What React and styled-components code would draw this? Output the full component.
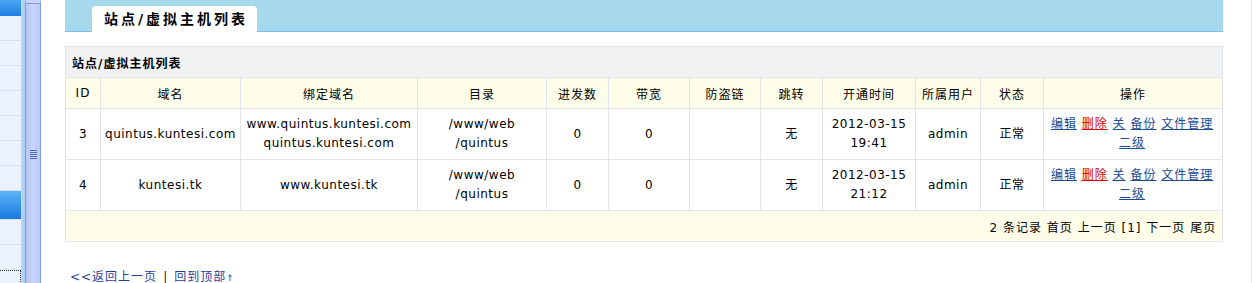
import styled, { createGlobalStyle } from "styled-components";

const GlobalStyle = createGlobalStyle`
  html, body {
    margin: 0;
    padding: 0;
    background: #fff;
  }
  body {
    font-family: "DejaVu Sans", "Noto Sans CJK SC", sans-serif;
    font-size: 12px;
    color: #000;
  }
`;

const columns = [
  { title: "ID", width: 35 },
  { title: "域名", width: 140 },
  { title: "绑定域名", width: 177 },
  { title: "目录", width: 129 },
  { title: "进发数", width: 62 },
  { title: "带宽", width: 81 },
  { title: "防盗链", width: 71 },
  { title: "跳转", width: 62 },
  { title: "开通时间", width: 93 },
  { title: "所属用户", width: 65 },
  { title: "状态", width: 63 },
  { title: "操作", width: 179 },
];

const sites = [
  {
    id: 3,
    domain: "quintus.kuntesi.com",
    bound: ["www.quintus.kuntesi.com", "quintus.kuntesi.com"],
    dir: ["/www/web", "/quintus"],
    date: "2012-03-15",
    time: "19:41",
  },
  {
    id: 4,
    domain: "kuntesi.tk",
    bound: ["www.kuntesi.tk"],
    dir: ["/www/web", "/quintus"],
    date: "2012-03-15",
    time: "21:12",
  },
];

const Page = styled.div`
  display: flex;
  height: 283px;
  overflow: hidden;
`;

const Sidebar = styled.div`
  width: 21px;
  flex-shrink: 0;
  background: #eaf3fd;
  display: flex;
  flex-direction: column;
  overflow: hidden;
`;

const SideHead = styled.div`
  height: 16px;
  flex-shrink: 0;
  background: linear-gradient(#4aa6f2, #1d7fe2);
`;

const SideItem = styled.div`
  height: ${(p) => (p.$active ? 28 : 24)}px;
  flex-shrink: 0;
  border-bottom: 1px solid #d2e2f4;
  background: ${(p) =>
    p.$active ? "linear-gradient(#5db4f7, #1a78e0)" : "transparent"};
  ${(p) => p.$focus && "border-top: 1px dotted #333; border-right: 1px dotted #333;"}
`;

const SideEdge = styled.div`
  width: 4px;
  flex-shrink: 0;
  background: linear-gradient(90deg, #bcd9f8, #a7cbf3);
`;

const Splitter = styled.div`
  width: 14px;
  flex-shrink: 0;
  border-left: 1px solid #7c9de0;
  border-right: 1px solid #7c9de0;
  border-top: 3px solid #c6d4f7;
  background: linear-gradient(90deg, #b4c6f4, #c9d5fa 50%, #b7c8f4);
  display: flex;
  align-items: flex-start;
  justify-content: center;
  padding-top: 147px;
  box-shadow: inset 0 1px 0 #7c9de0;
`;

const Grip = styled.svg`
  display: block;
`;

const Main = styled.div`
  flex: 1;
  padding: 0 28px 0 24px;
  border-right: 1px solid #e4e4e4;
  letter-spacing: 0.5px;
`;

const TabBar = styled.div`
  height: 31px;
  background: #a6d8ee;
  border-bottom: 1px solid #7ebde0;
  display: flex;
  align-items: flex-end;
  padding-left: 27px;
`;

const Tab = styled.div`
  width: 165px;
  height: 26px;
  margin-bottom: -1px;
  background: #fff;
  border-radius: 4px 4px 0 0;
  font-size: 14px;
  font-weight: bold;
  letter-spacing: 3px;
  line-height: 26px;
  text-align: center;
  text-indent: 3px;
`;

const Table = styled.table`
  margin-top: 14px;
  width: 100%;
  border-collapse: collapse;
  table-layout: fixed;
  border: 1px solid #e1e4e8;
`;

const Caption = styled.td`
  height: 30px;
  padding: 0 6px;
  background: #f1f2f4;
  font-weight: bold;
  letter-spacing: 1px;
  border: 1px solid #e1e4e8;
`;

const Th = styled.th`
  height: 30px;
  padding: 0;
  background: #fefde9;
  font-weight: normal;
  text-align: center;
  border: 1px solid #e1e4e8;
  letter-spacing: 1px;
`;

const Td = styled.td`
  height: 50px;
  padding: 0 2px;
  text-align: center;
  line-height: 19px;
  border: 1px solid #e1e4e8;
`;

const ActionTd = styled(Td)`
  padding: 0 7px 0 5px;
  letter-spacing: 1px;
`;

const ActionLink = styled.a`
  color: ${(p) => (p.$danger ? "#d40000" : "#1a4a94")};
  text-decoration: underline;
  cursor: pointer;
`;

const Footer = styled.td`
  height: 30px;
  padding: 0 6px;
  background: #fefde9;
  text-align: right;
  letter-spacing: 1px;
  border: 1px solid #e1e4e8;
`;

const BackLinks = styled.div`
  margin-top: 27px;
  padding-left: 5px;
  line-height: 16px;
  color: #1f3f9a;
  letter-spacing: 1px;
`;

const BackLink = styled.a`
  color: #1f3f9a;
  text-decoration: none;
  cursor: pointer;
`;

const Arrow = styled.span`
  font-size: 9px;
`;

const Divider = styled.span`
  color: #222;
  margin: 0 6px;
`;

const Lines = ({ items }) =>
  items.map((line, i) => (
    <div key={i}>{line}</div>
  ));

const App = () => {
  return (
    <>
      <GlobalStyle />
      <Page>
        <Sidebar>
          <SideHead />
          <SideItem />
          <SideItem />
          <SideItem />
          <SideItem />
          <SideItem />
          <SideItem />
          <SideItem />
          <SideItem $active />
          <SideItem />
          <SideItem />
          <SideItem $focus />
        </Sidebar>
        <SideEdge />
        <Splitter>
          <Grip width="7" height="9" viewBox="0 0 7 9">
            <rect x="0" y="0" width="7" height="1" fill="#4f67b8" />
            <rect x="0" y="2" width="7" height="1" fill="#4f67b8" />
            <rect x="0" y="4" width="7" height="1" fill="#4f67b8" />
            <rect x="0" y="6" width="7" height="1" fill="#4f67b8" />
            <rect x="0" y="8" width="7" height="1" fill="#4f67b8" />
          </Grip>
        </Splitter>
        <Main>
          <TabBar>
            <Tab>站点/虚拟主机列表</Tab>
          </TabBar>
          <Table>
            <colgroup>
              {columns.map((c) => (
                <col key={c.title} style={{ width: c.width }} />
              ))}
            </colgroup>
            <tbody>
              <tr>
                <Caption colSpan={columns.length}>站点/虚拟主机列表</Caption>
              </tr>
              <tr>
                {columns.map((c) => (
                  <Th key={c.title}>{c.title}</Th>
                ))}
              </tr>
              {sites.map((s) => (
                <tr key={s.id}>
                  <Td>{s.id}</Td>
                  <Td>{s.domain}</Td>
                  <Td>
                    <Lines items={s.bound} />
                  </Td>
                  <Td>
                    <Lines items={s.dir} />
                  </Td>
                  <Td>0</Td>
                  <Td>0</Td>
                  <Td></Td>
                  <Td>无</Td>
                  <Td>
                    <Lines items={[s.date, s.time]} />
                  </Td>
                  <Td>admin</Td>
                  <Td>正常</Td>
                  <ActionTd>
                    <ActionLink>编辑</ActionLink> <ActionLink $danger>删除</ActionLink>{" "}
                    <ActionLink>关</ActionLink> <ActionLink>备份</ActionLink>{" "}
                    <ActionLink>文件管理</ActionLink> <ActionLink>二级</ActionLink>
                  </ActionTd>
                </tr>
              ))}
              <tr>
                <Footer colSpan={columns.length}>
                  2 条记录 首页 上一页 [1] 下一页 尾页
                </Footer>
              </tr>
            </tbody>
          </Table>
          <BackLinks>
            <BackLink>&lt;&lt;返回上一页</BackLink>
            <Divider>|</Divider>
            <BackLink>
              回到顶部<Arrow>↑</Arrow>
            </BackLink>
          </BackLinks>
        </Main>
      </Page>
    </>
  );
};

export default App;
